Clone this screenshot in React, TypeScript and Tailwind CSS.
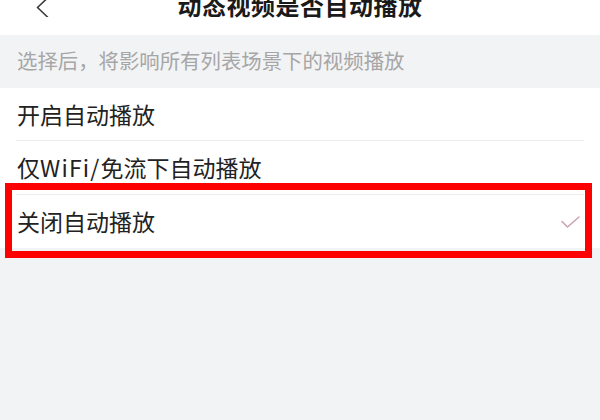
const FONT = "font-['Noto_Sans_CJK_SC','Noto_Sans',sans-serif]";

const OPTIONS = ["开启自动播放", "仅WiFi/免流下自动播放", "关闭自动播放"];

function BackIcon() {
  return (
    <svg className="h-[19px] w-[16px]" viewBox="0 0 16 19" fill="none" stroke="#3a3a3a" strokeWidth={1.6}>
      <path d="M13.5 0 3.5 9.5 13.5 19" strokeLinecap="round" strokeLinejoin="round" />
    </svg>
  );
}

function CheckIcon() {
  return (
    <svg className="h-[12px] w-[19px]" viewBox="0 0 19 12" fill="none" stroke="#c9a1b4" strokeWidth={1.5}>
      <path d="M1 5.5 6.5 11 18 1" strokeLinecap="round" strokeLinejoin="round" />
    </svg>
  );
}

function Label({ text }: { text: string }) {
  // the Latin part is set a little wider in the reference
  const parts = text.split(/(WiFi\/)/);
  return (
    <span>
      {parts.map((p, i) =>
        p === "WiFi/" ? (
          <span key={i} className="tracking-[1.2px]">
            {p}
          </span>
        ) : (
          p
        ),
      )}
    </span>
  );
}

export default function App() {
  const selected = 2;

  return (
    <div className={`flex h-[420px] w-[600px] flex-col overflow-hidden bg-[#f2f3f5] ${FONT}`}>
      <header className="relative flex h-[35px] shrink-0 items-start justify-center bg-white">
        <div className="absolute left-[34px] top-[-2px]">
          <BackIcon />
        </div>
        <h1 className="-mt-[7px] text-[24px] leading-[24px] font-bold tracking-[0.5px] text-[#1a1a1a]">
          动态视频是否自动播放
        </h1>
      </header>

      <div className="flex h-[53px] shrink-0 items-center px-[17px] text-[20.4px] leading-none text-[#a6a6a6]">
        <span className="-mt-[2px]">选择后，将影响所有列表场景下的视频播放</span>
      </div>

      <ul className="shrink-0 bg-white">
        {OPTIONS.map((label, i) => (
          <li key={label} className="relative">
            <div
              className={`flex items-center justify-between pl-[17px] pr-[20px] text-[23px] leading-none text-[#222] ${
                i === 0 ? "h-[52px]" : "h-[53px]"
              }`}
            >
              <Label text={label} />
              {i === selected ? <CheckIcon /> : null}
            </div>
            {i < OPTIONS.length - 1 ? <div className="mx-[16px] h-px bg-[#ececec]" /> : null}
            {i === selected ? (
              <div className="pointer-events-none absolute bottom-[-10px] left-[5px] right-[8px] top-[-12px] border-[7px] border-[#ff0000]" />
            ) : null}
          </li>
        ))}
      </ul>
    </div>
  );
}
